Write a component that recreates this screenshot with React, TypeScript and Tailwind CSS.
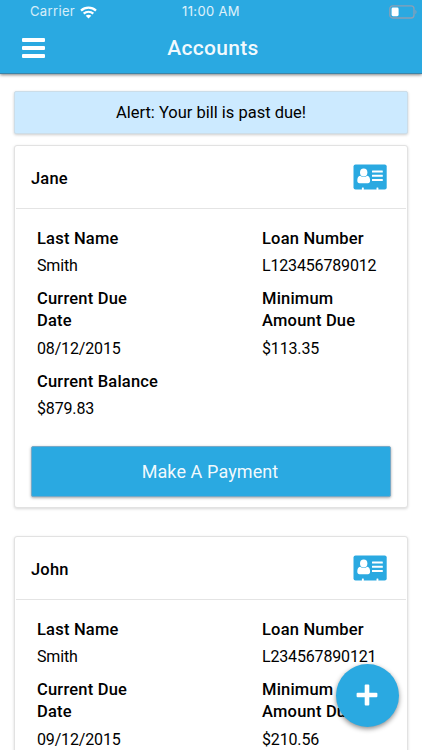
import React from 'react';

type Account = {
  name: string;
  lastName: string;
  loan: string;
  due: string;
  minimum: string;
  balance?: string;
};

const accounts: Account[] = [
  { name: 'Jane', lastName: 'Smith', loan: 'L123456789012', due: '08/12/2015', minimum: '$113.35', balance: '$879.83' },
  { name: 'John', lastName: 'Smith', loan: 'L234567890121', due: '09/12/2015', minimum: '$210.56' },
];

function WifiIcon() {
  return (
    <svg width="17" height="13" viewBox="0 0 17 13" fill="none" stroke="#fff" strokeWidth="2.2">
      <path d="M1 4.6C5.2.6 11.8.6 16 4.6" />
      <path d="M3.7 7.6c2.7-2.5 6.9-2.5 9.6 0" />
      <path d="M8.5 12.4 5.7 9.7c1.5-1.4 4.1-1.4 5.6 0z" fill="#fff" stroke="none" />
    </svg>
  );
}

function BatteryIcon() {
  return (
    <svg width="28" height="14" viewBox="0 0 28 14">
      <rect x="0.8" y="0.8" width="24.2" height="12.2" rx="3" fill="none" stroke="#8b9fb5" strokeWidth="1.3" />
      <rect x="2.6" y="2.6" width="7" height="8.6" rx="1.4" fill="#fff" />
      <path d="M26.4 5v4c.7-.3 1.1-1.1 1.1-2s-.4-1.7-1.1-2z" fill="#8b9fb5" />
    </svg>
  );
}

function ContactCardIcon() {
  return (
    <svg width="34" height="26" viewBox="0 0 34 26">
      <rect x="0.5" y="0.5" width="33.2" height="25" rx="2" fill="#2aa9e1" />
      <g fill="#fff">
        <ellipse cx="10.7" cy="8.4" rx="3.7" ry="4" />
        <path d="M7.2 11.8c2.1 1.6 4.900 1.600 7 0 2 .5 2.900 2.200 2.900 4.700 0 1.800-.8 2.700-2.100 2.700H6.500c-1.400 0-2.200-.9-2.200-2.700 0-2.500.9-4.200 2.900-4.700z" />
        <rect x="19" y="6.6" width="10.8" height="2" rx=".3" />
        <rect x="19" y="10.8" width="10.8" height="2" rx=".3" />
        <rect x="19" y="15" width="10.8" height="2" rx=".3" />
        <rect x="8.9" y="23.4" width="1.9" height="2.6" rx=".5" />
        <rect x="23.5" y="23.4" width="1.9" height="2.6" rx=".5" />
      </g>
    </svg>
  );
}

function Field({ label, value }: { label: string; value: string }) {
  return (
    <div className="mb-[11px] leading-[22px]">
      <div className="font-medium">{label}</div>
      <div className="mt-[5.5px] text-[16px] tracking-[-0.16px]">{value}</div>
    </div>
  );
}

function AccountCard({ account }: { account: Account }) {
  return (
    <section className="mx-[14px] h-[363px] shrink-0 rounded-[3px] border border-[#e2e2e2] bg-white shadow-[0_1px_3px_rgba(0,0,0,0.16)]">
      <header className="mx-px flex h-[63px] items-center justify-between border-b border-[#e4e4e4] pl-[15px] pr-[19px]">
        <h2 className="pt-1 text-[16.5px] font-medium">{account.name}</h2>
        <ContactCardIcon />
      </header>
      <div className="flex h-[237px] pl-[22px] pt-[18.5px]">
        <div className="w-[225px]">
          <div className="w-[122px]">
            <Field label="Last Name" value={account.lastName} />
            <Field label="Current Due Date" value={account.due} />
            {account.balance && <Field label="Current Balance" value={account.balance} />}
          </div>
        </div>
        <div className="w-[120px]">
          <Field label="Loan Number" value={account.loan} />
          <Field label="Minimum Amount Due" value={account.minimum} />
        </div>
      </div>
      <button className="mx-4 flex h-[51px] w-[360px] items-center justify-center rounded-[2px] border border-[#75a9c8] bg-[#2aa9e1] pr-0.5 text-[18px] tracking-[0.1px] text-white/95 shadow-[0_1px_3px_rgba(0,0,0,0.35)]">
        Make A Payment
      </button>
    </section>
  );
}

export default function App() {
  return (
    <main className="relative flex h-[750px] w-[422px] flex-col overflow-hidden bg-white font-['Roboto',sans-serif] text-[16.5px] tracking-[0.2px] text-black">
      <header className="z-10 h-[74px] shrink-0 border-b border-[#3b84a8] bg-[#2aa9e1] text-white shadow-[0_1px_3px_rgba(0,0,0,0.5)]">
        <div className="grid h-6 grid-cols-3 items-center font-['Inter',sans-serif] text-[13px] tracking-[0.35px]">
          <div className="flex items-center gap-[5px] pl-[30px]">
            <span className="text-white/80">Carrier</span>
            <WifiIcon />
          </div>
          <span className="text-center text-white/85">11:00 AM</span>
          <div className="flex justify-end pr-[5px]">
            <BatteryIcon />
          </div>
        </div>
        <div className="grid h-[49px] grid-cols-[1fr_auto_1fr] items-center px-[22px]">
          <button aria-label="Menu" className="mb-0.5 flex w-[23px] flex-col gap-1">
            <span className="h-1 rounded-[1px] bg-white" />
            <span className="h-1 rounded-[1px] bg-white" />
            <span className="h-1 rounded-[1px] bg-white" />
          </button>
          <h1 className="pl-1 text-[21px] font-medium tracking-[0.3px] text-white/95">Accounts</h1>
        </div>
      </header>
      <div className="mx-[14px] mb-[11px] mt-[17px] flex h-[43px] shrink-0 items-center justify-center rounded-[2px] border border-[#ccdde8] bg-[#cceaff] pt-0.5 tracking-normal shadow-[0_1px_3px_rgba(0,0,0,0.2)]">
        Alert: Your bill is past due!
      </div>
      <div className="flex flex-col gap-7">
        {accounts.map((account) => (
          <AccountCard key={account.name} account={account} />
        ))}
      </div>
      <button aria-label="Add account" className="absolute left-[336px] top-[664px] z-20 flex h-[63px] w-[63px] items-center justify-center rounded-full bg-[#2aa9e1] shadow-[0_2px_5px_rgba(0,0,0,0.45)]">
        <svg width="22" height="22" viewBox="0 0 22 22" className="-mt-0.5 mr-px">
          <rect x="8.7" y="0.6" width="4.6" height="20.8" rx="1" fill="#fff" />
          <rect x="0.6" y="8.7" width="20.8" height="4.6" rx="1" fill="#fff" />
        </svg>
      </button>
    </main>
  );
}
